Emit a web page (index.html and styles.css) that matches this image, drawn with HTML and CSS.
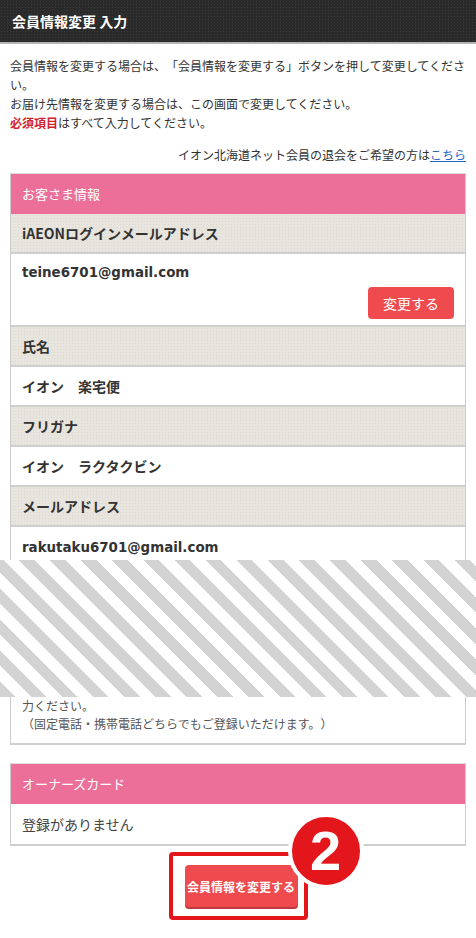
FILE: index.html
```html
<!DOCTYPE html>
<html lang="ja">
<head>
  <meta charset="UTF-8">
  <title>会員情報変更 入力</title>
  <link rel="stylesheet" href="styles.css">
</head>
<body>
  <header class="page-head">会員情報変更 入力</header>

  <main class="content">
    <div class="intro">
      <p>会員情報を変更する場合は、「会員情報を変更する」ボタンを押して変更してください。</p>
      <p>お届け先情報を変更する場合は、この画面で変更してください。</p>
      <p><span class="req">必須項目</span>はすべて入力してください。</p>
    </div>
    <p class="leave">イオン北海道ネット会員の退会をご希望の方は<a href="#">こちら</a></p>

    <section class="panel">
      <h3 class="panel-title">お客さま情報</h3>
      <div class="row-label">iAEONログインメールアドレス</div>
      <div class="row-value">
        <div class="en">teine6701@gmail.com</div>
        <div class="row-action"><button class="btn-small">変更する</button></div>
      </div>
      <div class="row-label">氏名</div>
      <div class="row-value">イオン　楽宅便</div>
      <div class="row-label">フリガナ</div>
      <div class="row-value">イオン　ラクタクビン</div>
      <div class="row-label">メールアドレス</div>
      <div class="row-value cut"><span class="en">rakutaku6701@gmail.com</span></div>
    </section>

    <div class="omit"></div>

    <section class="panel panel-rest">
      <p class="note">力ください。<br>（固定電話・携帯電話どちらでもご登録いただけます。）</p>
    </section>

    <section class="panel panel-cards">
      <h3 class="panel-title">オーナーズカード</h3>
      <div class="row-value plain">登録がありません</div>
    </section>

    <div class="submit-area">
      <div class="submit-frame">
        <button class="btn-submit">会員情報を変更する</button>
        <span class="step-badge">2</span>
      </div>
    </div>
  </main>
</body>
</html>
```

FILE: styles.css
```css
body {
  margin: 0;
  font-family: "Noto Sans CJK JP", sans-serif;
  color: #333;
  background: #fff;
  text-spacing-trim: space-all;
}
.page-head {
  height: 42px;
  line-height: 42px;
  padding-left: 12px;
  background-color: #2a2a2a;
  background-image: radial-gradient(#3a3a3a 0.6px, transparent 0.8px);
  background-size: 3px 3px;
  border-bottom: 2px solid #b5b5b5;
  color: #fff;
  font-size: 14px;
  font-weight: bold;
}
.content {
  padding: 12px 10px 0;
}
.intro p {
  margin: 0;
  font-size: 12px;
  line-height: 19px;
}
.req {
  color: #d2232a;
  font-weight: bold;
}
.leave {
  margin: 13px 0 0;
  text-align: right;
  font-size: 12px;
  line-height: 19px;
}
.leave a {
  color: #2763c1;
}
.panel {
  margin-top: 9px;
  border-left: 1px solid #ccc;
  border-right: 1px solid #ccc;
}
.panel-title {
  margin: 0;
  height: 40px;
  line-height: 40px;
  padding-left: 11px;
  border-top: 1px solid #ddd;
  background: #eb6f99;
  color: #fff;
  font-size: 13px;
  font-weight: normal;
}
.row-label {
  height: 38px;
  line-height: 38px;
  padding-left: 11px;
  background-color: #e8e5de;
  background-image: radial-gradient(#dcd8cf 0.6px, transparent 0.8px);
  background-size: 3px 3px;
  border-bottom: 2px solid #cfcfcf;
  font-size: 14px;
  font-weight: bold;
}
.row-value {
  padding: 9px 11px;
  line-height: 20px;
  border-bottom: 2px solid #cfcfcf;
  font-size: 14px;
  font-weight: bold;
}
.en {
  font-family: "DejaVu Sans", "Noto Sans CJK JP", sans-serif;
  font-size: 13.4px;
}
.row-action {
  display: flex;
  justify-content: flex-end;
  margin-top: 4px;
  margin-bottom: -3px;
}
.btn-small {
  width: 86px;
  height: 32px;
  border: none;
  border-radius: 4px;
  background: #ef4b4f;
  color: #fff;
  font-family: inherit;
  font-size: 14px;
}
.row-value.cut {
  height: 33px;
  box-sizing: border-box;
  overflow: hidden;
  border-bottom: none;
}
.omit {
  margin: 0 -10px;
  height: 137px;
  background: repeating-linear-gradient(45deg, #d3d3d3 0 11px, #fff 11px 22px);
}
.panel-rest {
  margin-top: 0;
  border-bottom: 2px solid #cfcfcf;
}
.note {
  margin: 0;
  padding: 0 11px 10px;
  font-size: 12px;
  line-height: 18px;
  color: #555;
}
.panel-cards {
  margin-top: 18px;
}
.row-value.plain {
  padding: 10px 11px;
  font-weight: normal;
  color: #444;
}
.submit-area {
  display: flex;
  justify-content: center;
  margin-top: 6px;
}
.submit-frame {
  position: relative;
  padding: 9px 6px 9px 12px;
  border: 4px solid #e3161b;
  border-radius: 4px;
}
.btn-submit {
  display: block;
  width: 113px;
  height: 42px;
  padding: 0;
  border: none;
  border-radius: 4px;
  background: #ef4b4f;
  box-shadow: 0 2px 0 #c0383b;
  color: #fff;
  font-family: inherit;
  font-size: 12px;
  font-weight: bold;
}
.step-badge {
  position: absolute;
  left: 115px;
  top: -43px;
  width: 76px;
  height: 76px;
  box-sizing: border-box;
  display: flex;
  align-items: center;
  justify-content: center;
  border: 4px solid #fff;
  border-radius: 50%;
  background: #e3161b;
  color: #fff;
  font-family: "Liberation Sans", Arial, sans-serif;
  font-size: 56px;
  font-weight: bold;
  line-height: 1;
}
```
